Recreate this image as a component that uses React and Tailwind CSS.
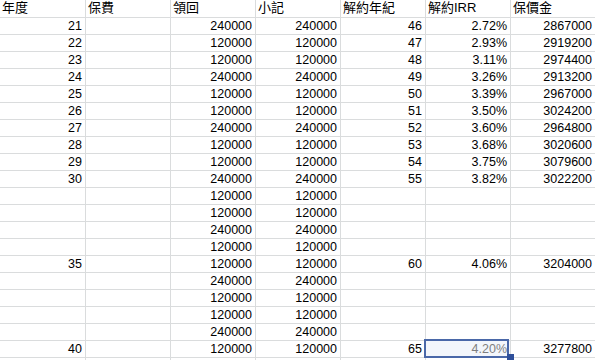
const headers = ["年度", "保費", "領回", "小記", "解約年紀", "解約IRR", "保價金"];

const rows = [
  ["21", "", "240000", "240000", "46", "2.72%", "2867000"],
  ["22", "", "120000", "120000", "47", "2.93%", "2919200"],
  ["23", "", "120000", "120000", "48", "3.11%", "2974400"],
  ["24", "", "240000", "240000", "49", "3.26%", "2913200"],
  ["25", "", "120000", "120000", "50", "3.39%", "2967000"],
  ["26", "", "120000", "120000", "51", "3.50%", "3024200"],
  ["27", "", "240000", "240000", "52", "3.60%", "2964800"],
  ["28", "", "120000", "120000", "53", "3.68%", "3020600"],
  ["29", "", "120000", "120000", "54", "3.75%", "3079600"],
  ["30", "", "240000", "240000", "55", "3.82%", "3022200"],
  ["", "", "120000", "120000", "", "", ""],
  ["", "", "120000", "120000", "", "", ""],
  ["", "", "240000", "240000", "", "", ""],
  ["", "", "120000", "120000", "", "", ""],
  ["35", "", "120000", "120000", "60", "4.06%", "3204000"],
  ["", "", "240000", "240000", "", "", ""],
  ["", "", "120000", "120000", "", "", ""],
  ["", "", "120000", "120000", "", "", ""],
  ["", "", "240000", "240000", "", "", ""],
  ["40", "", "120000", "120000", "65", "4.20%", "3277800"],
  ["", "", "", "", "", "", ""],
];

const font = { fontFamily: '"Liberation Sans", "Noto Sans CJK TC", Arial, sans-serif' };

export default function App() {
  return (
    <div className="h-[360px] w-[596px] overflow-hidden bg-white" style={font}>
      <div className="grid grid-cols-[85px_repeat(6,84px)] grid-rows-[17px_repeat(21,16px)] gap-px bg-[#dadcdd] w-max">
        {headers.map((h) => (
          <div key={h} className="bg-white pl-[2px] text-[13px] leading-[16px] text-black whitespace-nowrap">
            {h}
          </div>
        ))}
        {rows.map((r, ri) =>
          r.map((v, ci) => {
            const selected = ri === 19 && ci === 5;
            return (
              <div
                key={`${ri}-${ci}`}
                className={
                  selected
                    ? "relative bg-[#f3f6fb] pr-[3px] text-right text-[12.5px] leading-[16px] text-[#7f7f7f]"
                    : "bg-white pr-[3px] text-right text-[12.5px] leading-[16px] text-black"
                }
              >
                {v}
                {selected ? (
                  <>
                    <div className="absolute -left-[2px] -top-[2px] h-[19px] w-[85px] border-2 border-[#4a68a8]" />
                    <div className="absolute -bottom-[3px] -right-[4px] h-[6px] w-[7px] bg-[#2e4f9a]" />
                  </>
                ) : null}
              </div>
            );
          })
        )}
      </div>
    </div>
  );
}
